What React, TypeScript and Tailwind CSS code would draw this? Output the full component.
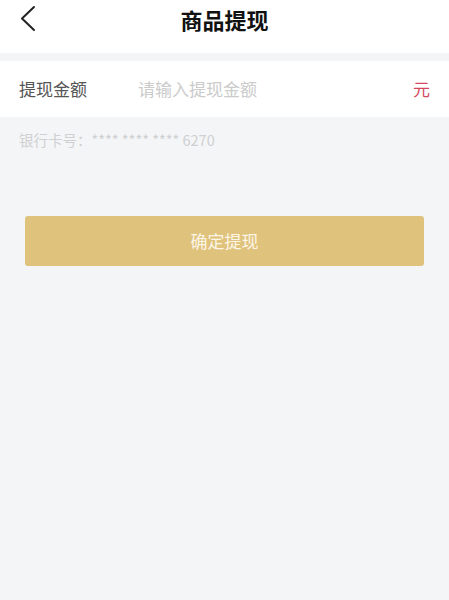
export default function App() {
  return (
    <div className="min-h-[600px] w-full bg-[#f4f5f7]" style={{ fontFamily: '"Noto Sans CJK SC", "Noto Sans", sans-serif' }}>
      <div className="relative flex h-[53px] items-center justify-center bg-white">
        <svg className="absolute left-[17px] top-[5px]" width="22" height="27" viewBox="0 0 22 27" fill="none">
          <path d="M17 2 L5 13.5 L17 25" stroke="#222" strokeWidth="2" strokeLinecap="round" strokeLinejoin="round" />
        </svg>
        <span className="-mt-[16px] text-[22px] font-bold leading-none text-[#111]">商品提现</span>
      </div>
      <div className="mt-[8px] flex h-[56px] items-center bg-white px-[19px]">
        <span className="w-[119px] text-[17px] text-[#555]">提现金额</span>
        <input
          className="min-w-0 flex-1 bg-transparent text-[17px] text-[#333] outline-none placeholder:text-[#cbcbcb]"
          placeholder="请输入提现金额"
        />
        <span className="text-[17px] text-[#d4495f]">元</span>
      </div>
      <div className="px-[19px] pt-[12px] text-[14.5px] text-[#cfd0d2]">银行卡号：**** **** **** 6270</div>
      <div className="px-[25px] pt-[65px]">
        <button className="flex h-[50px] w-full items-center justify-center rounded-[3px] bg-[#dfc27c] text-[17px] text-[#fdf6e6]">
          确定提现
        </button>
      </div>
    </div>
  );
}
